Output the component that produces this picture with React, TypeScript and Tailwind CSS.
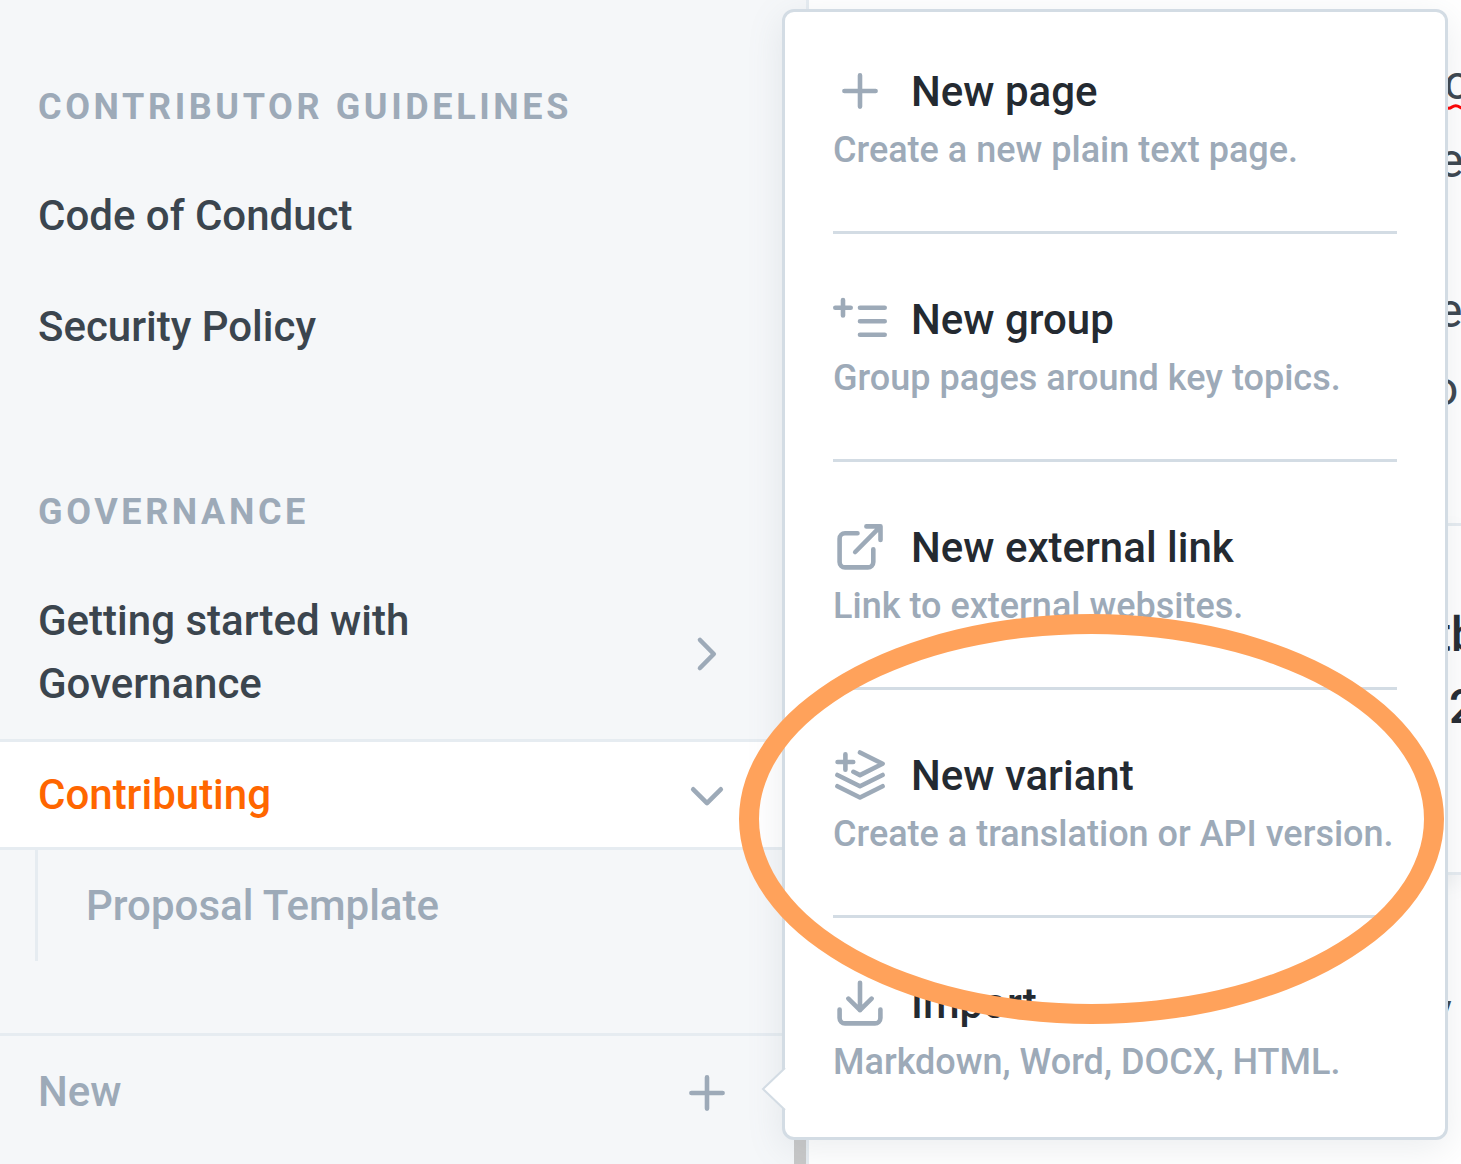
import React from "react";

const stroke = {
  fill: "none",
  stroke: "#9daab8",
  strokeWidth: 4.6,
  strokeLinecap: "round" as const,
  strokeLinejoin: "round" as const,
};

function Icon({ d, className = "" }: { d: string; className?: string }) {
  return (
    <svg viewBox="0 0 54 54" className={`h-[54px] w-[54px] shrink-0 ${className}`} {...stroke}>
      <path d={d} />
    </svg>
  );
}

const icons = {
  plus: "M27 11.4v31.2M11.4 27h31.2",
  group: "M2.3 15.7h15.4M10 8v15.4M27 15.7H51.7M27 29.2H51.7M27 42.7H51.7",
  link: "M24.5 13.3H12a5.4 5.4 0 0 0-5.4 5.4V42a5.4 5.4 0 0 0 5.4 5.4h22.9a5.4 5.4 0 0 0 5.4-5.4V29.2M22.2 32 47.3 6.7M33.4 6.4H47.5V20",
  layers: "M4.6 14h15.6M12.4 6.2v15.6M27 4.5 49.6 15.8 27 27.1l-6.6-3.3M4.4 27 27 38.2 49.6 27M4.4 38.2 27 49.5 49.6 38.2",
  download: "M27 6.8v27.4M15.4 22.6 27 34.2l11.6-11.6M6.6 33.6V42a5.4 5.4 0 0 0 5.4 5.4h30a5.4 5.4 0 0 0 5.4-5.4v-8.4",
  right: "M20 15 33.8 29 20 43",
  down: "M13.2 21.3 27 35.1l13.8-13.8",
};

const menu = [
  { icon: icons.plus, title: "New page", text: "Create a new plain text page." },
  { icon: icons.group, title: "New group", text: "Group pages around key topics." },
  { icon: icons.link, title: "New external link", text: "Link to external websites." },
  { icon: icons.layers, title: "New variant", text: "Create a translation or API version." },
  { icon: icons.download, title: "Import", text: "Markdown, Word, DOCX, HTML." },
];

function Heading({ children }: { children: React.ReactNode }) {
  return (
    <h2 className="mb-[26px] px-[38px] pt-px text-[36px] leading-[54px] font-bold tracking-[3.6px] text-[#9daab8] uppercase">
      {children}
    </h2>
  );
}

function NavItem({ children }: { children: React.ReactNode }) {
  return (
    <a className="flex items-center justify-between border-y-[3px] border-transparent py-[21px] pr-[72px] pl-[38px]">
      {children}
    </a>
  );
}

function Sidebar() {
  return (
    <aside className="flex w-[809px] shrink-0 flex-col border-r-[3px] border-[#e6ecf1] bg-[#f5f7f9] text-[42px] leading-[63px] font-medium text-[#3b454e]">
      <nav className="h-[1033px] pt-[79px]">
        <Heading>Contributor guidelines</Heading>
        <NavItem>Code of Conduct</NavItem>
        <NavItem>Security Policy</NavItem>
        <div className="h-[102px]" />
        <Heading>Governance</Heading>
        <NavItem>
          <span className="w-[480px]">Getting started with Governance</span>
          <Icon d={icons.right} />
        </NavItem>
        <a className="flex items-center justify-between border-y-[3px] border-[#e6ecf1] bg-white py-[21px] pr-[72px] pl-[38px] text-[#ff6600]">
          Contributing
          <Icon d={icons.down} />
        </a>
        <div className="ml-[35px] border-l-[3px] border-[#e6ecf1] py-6 pl-12 text-[#9daab8]">
          Proposal Template
        </div>
      </nav>
      <div className="flex flex-1 justify-between border-t-[3px] border-[#e6ecf1] pt-6 pr-[72px] pl-[38px] text-[#9daab8]">
        New
        <Icon d={icons.plus} className="mt-[6px]" />
      </div>
    </aside>
  );
}

function Content() {
  return (
    <main className="flex-1 overflow-hidden bg-white text-[48px] text-[#3b454e]">
      <div className="flex h-[523px] flex-col items-start pt-11 pl-[635px] leading-[78px]">
        <span className="relative">
          c
          <svg className="absolute top-[59px] left-0 h-2 w-6 fill-none stroke-[#ff0000]" strokeWidth="3" viewBox="0 0 24 8">
            <path d="M0 3C3 5.8 5.5 5.8 8 4S13 2.2 16 4.2 21 6 24 4" />
          </svg>
        </span>
        <span className="-ml-[6px]">e</span>
        <span className="mt-[72px] -ml-[7px]">e</span>
        <span className="-ml-[13px]">o</span>
      </div>
      <div className="flex h-[352px] flex-col border-y-[3px] border-[#e6ecf1] pt-[73px] pl-[626px] leading-[72px] font-medium text-[#242a31] shadow-[0_9px_18px_rgba(116,129,141,0.1)]">
        <span>tb</span>
        <span className="pl-[14px]">2</span>
      </div>
      <div className="pt-[97px] pl-[620px] leading-[78px]">y</div>
    </main>
  );
}

function NewMenu() {
  return (
    <div className="absolute top-[9px] left-[782px] w-[666px] rounded-[12px] border-[3px] border-[#d3dce4] bg-white p-12 shadow-[0_9px_36px_rgba(116,129,141,0.14)]">
      <svg className="absolute top-[1050px] -left-[24px] h-[54px] w-[27px]" viewBox="0 0 27 54">
        <path d="M24 6 2 27l22 21h3V6z" fill="#fff" />
        <path d="M24 6 2 27l22 21" fill="none" stroke="#d3dce4" strokeWidth="2" />
      </svg>
      {menu.map((item, i) => (
        <div key={item.title} className={i ? "mt-[54px] border-t-[3px] border-[#d3dce4] pt-[54px]" : ""}>
          <div className="flex h-[63px] items-start text-[42px] leading-[63px] font-medium text-[#242a31]">
            <Icon d={item.icon} className="mt-1 mr-6" />
            {item.title}
          </div>
          <p className="text-[36px] leading-[54px] font-medium whitespace-nowrap text-[#9daab8] tracking-[0.01px]">{item.text}</p>
        </div>
      ))}
    </div>
  );
}

export default function App() {
  return (
    <div className="relative flex h-[1164px] w-[1461px] overflow-hidden bg-white font-[Roboto,sans-serif]">
      <Sidebar />
      <Content />
      <div className="absolute bottom-0 left-[794px] h-[60px] w-3 bg-[#c8c8c8]" />
      <NewMenu />
      <div className="absolute top-[614px] left-[739px] h-[410px] w-[705px] rounded-[50%] border-[20px] border-[#ffa25b]" />
    </div>
  );
}
